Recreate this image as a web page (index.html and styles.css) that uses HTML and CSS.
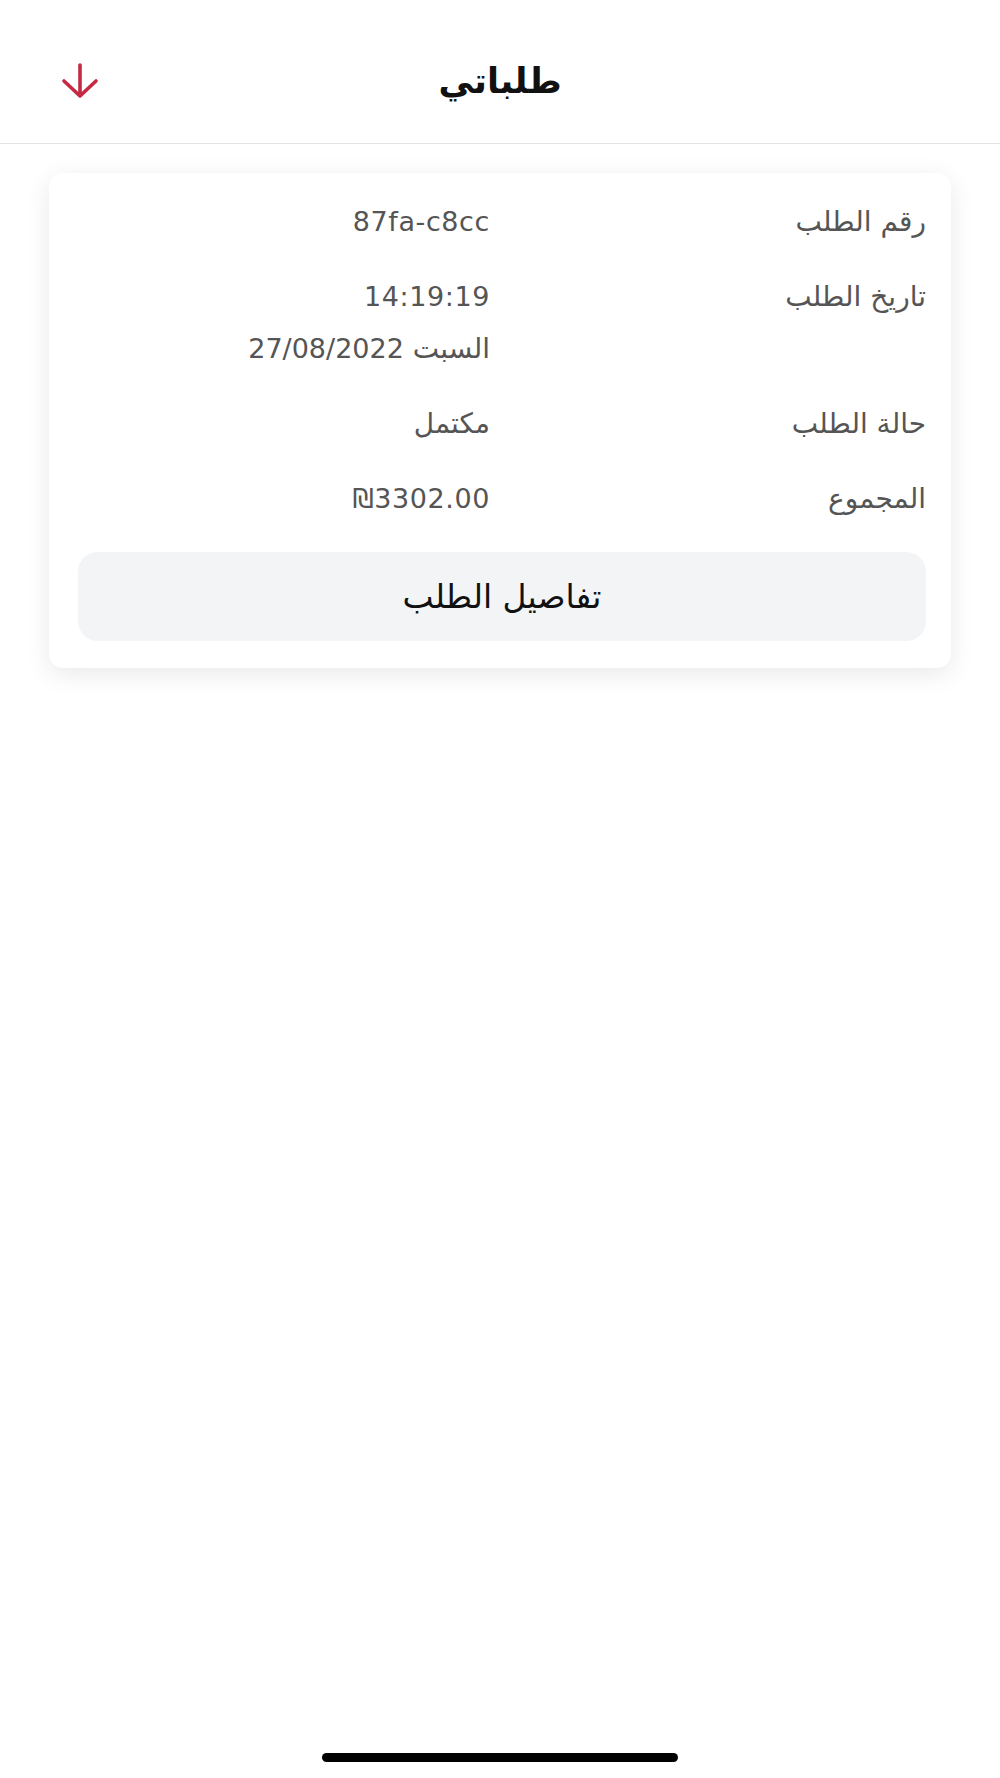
FILE: index.html
```html
<!DOCTYPE html>
<html lang="ar" dir="rtl">
  <head>
    <meta charset="utf-8" />
    <title>طلباتي</title>
    <link rel="stylesheet" href="styles.css">
  </head>
  <body>
    <div id="wrap">
      <div id="header">
        <span class="side"></span>
        <h1 class="title">طلباتي</h1>
        <button class="back" type="button">
          <svg width="40" height="40" viewBox="0 0 40 40">
            <path d="M20 6 V37 M4 22 L20 37 L36 22" fill="none" stroke="#c42b42" stroke-width="3.6" stroke-linecap="round" stroke-linejoin="round" />
          </svg>
        </button>
      </div>

      <div id="main">
        <div class="card">
          <div class="row">
            <span class="label">رقم الطلب</span>
            <span class="value latin" dir="ltr">87fa-c8cc</span>
          </div>
          <div class="row">
            <span class="label">تاريخ الطلب</span>
            <span class="value">
              <span class="line latin" dir="ltr">14:19:19</span>
              <span class="line">السبت <span class="latin">27/08/2022</span></span>
            </span>
          </div>
          <div class="row">
            <span class="label">حالة الطلب</span>
            <span class="value">مكتمل</span>
          </div>
          <div class="row">
            <span class="label">المجموع</span>
            <span class="value latin" dir="ltr">₪3302.00</span>
          </div>
          <button class="details" type="button">تفاصيل الطلب</button>
        </div>
      </div>

      <div class="home_bar"></div>
    </div>
  </body>
</html>
```

FILE: styles.css
```css
* {
  margin: 0;
  padding: 0;
  box-sizing: border-box;
}
html,
body {
  background: #fff;
}
body {
  font-family: "DejaVu Sans", "Noto Sans", sans-serif;
  color: #111;
}
#wrap {
  /* 전체 화면 */
  width: 1000px;
  height: 1778px;
  display: flex;
  flex-direction: column;
}

#header {
  /* 상단 제목줄 */
  height: 144px;
  display: grid;
  grid-template-columns: 1fr auto 1fr;
  align-items: center;
  padding: 18px 60px 0 60px;
  border-bottom: 1px solid #e3e3e3;
}
.title {
  font-size: 35px;
  font-weight: 700;
  color: #111;
  line-height: 44px;
}
.back {
  justify-self: end;
  width: 40px;
  height: 40px;
  margin-top: -4px;
  border: 0;
  background: transparent;
  display: flex;
}

#main {
  flex-grow: 1;
  padding: 29px 49px 0 49px;
}
.card {
  background: #fff;
  border-radius: 14px;
  box-shadow: 0 6px 26px rgba(0, 0, 0, 0.09);
  padding: 23px 25px 27px 29px;
  display: flex;
  flex-direction: column;
  gap: 23px;
}
.row {
  display: grid;
  grid-template-columns: 1fr 1fr;
  column-gap: 24px;
  font-size: 28px;
  line-height: 52px;
  color: #555;
}
.label {
  text-align: right;
}
.value {
  text-align: right;
}
.latin {
  font-size: 27px;
  letter-spacing: 0.6px;
}
.value .line {
  display: block;
}
.details {
  /* 주문 상세 버튼 */
  margin-top: 4px;
  height: 89px;
  border: 0;
  border-radius: 20px;
  background: #f3f4f6;
  font-family: inherit;
  font-size: 33px;
  color: #111;
}

.home_bar {
  align-self: center;
  width: 356px;
  height: 9px;
  margin-bottom: 16px;
  border-radius: 5px;
  background: #000;
}
```
